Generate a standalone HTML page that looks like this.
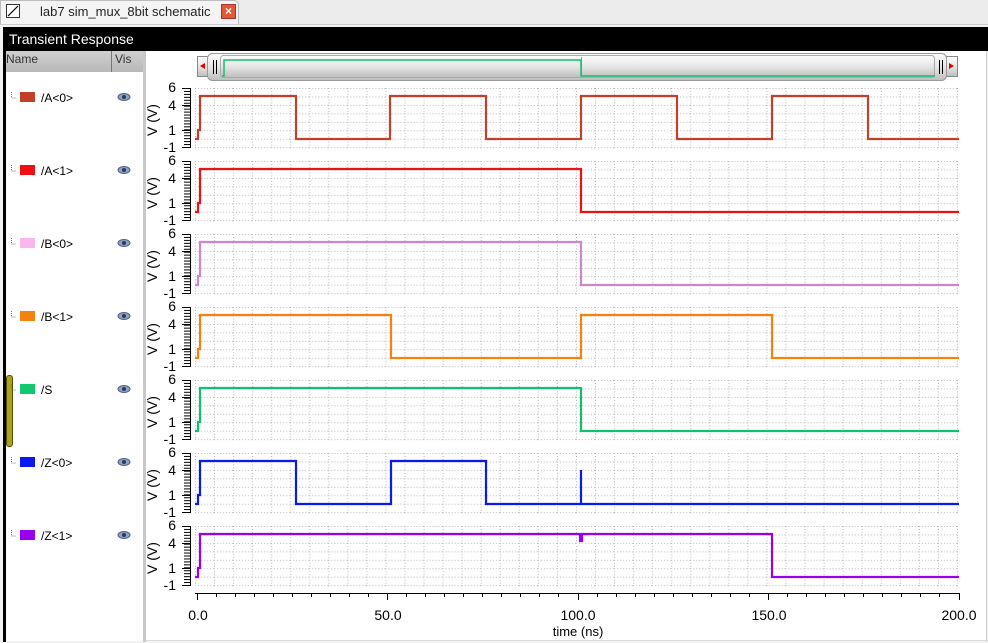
<!DOCTYPE html>
<html><head><meta charset="utf-8"><style>
body{margin:0;width:988px;height:642px;overflow:hidden;background:#ececec;font-family:"Liberation Sans",sans-serif;position:relative}
.a{position:absolute}
</style></head><body>
<div class="a" style="left:0;top:0;width:237px;height:24px;background:#f4f4f4;border:1px solid #bbb;border-bottom:none;border-radius:0 5px 0 0"></div>
<div class="a" style="left:6px;top:4px;width:12px;height:12px;border:1px solid #333;background:#fff"><svg width="12" height="12" style="position:absolute;left:0;top:0"><line x1="1" y1="11" x2="11" y2="1" stroke="#000" stroke-width="1.2"/></svg></div>
<div class="a" style="left:40px;top:4px;font-size:13px;color:#222">lab7 sim_mux_8bit schematic</div>
<div class="a" style="left:221px;top:4px;width:13px;height:13px;background:#e05a3a;border:1px solid #a33;color:#fff;font-size:12px;line-height:13px;text-align:center;font-weight:bold">×</div>
<div class="a" style="left:0;top:24px;width:988px;height:618px;background:#f2f2f2;border-top:1px solid #ccc"></div>
<div class="a" style="left:3px;top:27px;width:985px;height:24px;background:#000"></div>
<div class="a" style="left:9px;top:31px;font-size:14px;color:#fff">Transient Response</div>
<div class="a" style="left:3px;top:51px;width:3px;height:591px;background:#000"></div>
<div class="a" style="left:6px;top:51px;width:137px;height:590px;background:#fff"></div>
<div class="a" style="left:6px;top:51px;width:137px;height:21px;background:linear-gradient(#d0d0d0,#b8b8b8)"></div>
<div class="a" style="left:111px;top:51px;width:1px;height:21px;background:#777"></div>
<div class="a" style="left:6px;top:52px;font-size:12px;color:#333">Name</div>
<div class="a" style="left:115px;top:52px;font-size:12px;color:#333">Vis</div>
<div class="a" style="left:143px;top:51px;width:3px;height:591px;background:#c8c8c8"></div>
<div class="a" style="left:146px;top:51px;width:840px;height:589px;background:#fff"></div>
<div class="a" style="left:6px;top:375px;width:5px;height:70px;background:#a9a21c;border:1px solid #554f00;border-radius:3px"></div>

<svg class="a" style="left:0;top:0" width="988" height="642">
<defs>
<pattern id="g" x="195" y="88" width="19.05" height="8.45" patternUnits="userSpaceOnUse">
<line x1="0.5" y1="0" x2="0.5" y2="8.45" stroke="#b8b8b8" stroke-dasharray="1 2"/>
<line x1="0" y1="0.5" x2="19.05" y2="0.5" stroke="#b8b8b8" stroke-dasharray="1 2"/>
</pattern>
<pattern id="r" x="0" y="88" width="10" height="2.95" patternUnits="userSpaceOnUse">
<line x1="0" y1="0.5" x2="10" y2="0.5" stroke="#000"/>
</pattern>
<g id="eye"><ellipse cx="0" cy="0" rx="6" ry="3.5" fill="#8fa0c0" stroke="#506080"/><circle cx="0" cy="0" r="2" fill="#2a3a60"/></g>
<g id="strip">
<rect x="195" y="88" width="765" height="61" fill="url(#g)"/>
<rect x="184" y="88" width="6" height="60" fill="url(#r)"/>
<line x1="190.5" y1="88" x2="190.5" y2="148" stroke="#000"/>
<line x1="182" y1="88.5" x2="190" y2="88.5" stroke="#000"/><line x1="182" y1="105.5" x2="190" y2="105.5" stroke="#000"/><line x1="182" y1="130.5" x2="190" y2="130.5" stroke="#000"/><line x1="182" y1="147.5" x2="190" y2="147.5" stroke="#000"/>
<text x="176" y="92" font-size="14" text-anchor="end" font-family="Liberation Sans">6</text>
<text x="176" y="110" font-size="14" text-anchor="end" font-family="Liberation Sans">4</text>
<text x="176" y="135" font-size="14" text-anchor="end" font-family="Liberation Sans">1</text>
<text x="176" y="152" font-size="14" text-anchor="end" font-family="Liberation Sans">-1</text>
<text transform="translate(157,136) rotate(-90)" font-size="14" font-family="Liberation Sans">V (V)</text>
<use href="#eye" x="124" y="97"/>
<path d="M11.5,92 V98 H16" stroke="#777" stroke-dasharray="1 1" fill="none"/>
</g>
</defs>
<use href="#strip" y="0"/><use href="#strip" y="73"/><use href="#strip" y="146"/><use href="#strip" y="219"/><use href="#strip" y="292"/><use href="#strip" y="365"/><use href="#strip" y="438"/>
<g fill="none" stroke-width="2.2">
<path stroke="#c2402a" d="M195,139 H198 V130 H200 V96 H296 V139 H390 V96 H486 V139 H581 V96 H677 V139 H772 V96 H868 V139 H959"/>
<path transform="translate(0,73)" stroke="#ee1111" d="M195,139 H198 V130 H200 V96 H581 V139 H959"/>
<path transform="translate(0,146)" stroke="#cc88cc" d="M195,139 H198 V130 H200 V96 H581 V139 H959"/>
<path transform="translate(0,219)" stroke="#f5820f" d="M195,139 H198 V130 H200 V96 H391 V139 H581 V96 H772 V139 H959"/>
<path transform="translate(0,292)" stroke="#10c070" d="M195,139 H198 V130 H200 V96 H581 V139 H959"/>
<path transform="translate(0,365)" stroke="#0a1aee" d="M195,139 H198 V130 H200 V96 H296 V139 H391 V96 H486 V139 H581 V105 V139 H959"/>
<path transform="translate(0,438)" stroke="#9900ee" d="M195,139 H198 V130 H200 V96 H580 V103 H582 V96 H772 V139 H959"/>
</g>
<g font-size="12" font-family="Liberation Sans" fill="#000">
<rect x="20" y="92" width="15" height="10" fill="#c2402a"/><text x="41" y="102">/A&lt;0&gt;</text>
<rect x="20" y="165" width="15" height="10" fill="#ee1111"/><text x="41" y="175">/A&lt;1&gt;</text>
<rect x="20" y="238" width="15" height="10" fill="#f8b8ee"/><text x="41" y="248">/B&lt;0&gt;</text>
<rect x="20" y="311" width="15" height="10" fill="#f5820f"/><text x="41" y="321">/B&lt;1&gt;</text>
<rect x="20" y="384" width="15" height="10" fill="#10c870"/><text x="41" y="394">/S</text>
<rect x="20" y="457" width="15" height="10" fill="#0a1aee"/><text x="41" y="467">/Z&lt;0&gt;</text>
<rect x="20" y="530" width="15" height="10" fill="#9900ee"/><text x="41" y="540">/Z&lt;1&gt;</text>
</g>
<line x1="195" y1="593.5" x2="960" y2="593.5" stroke="#000"/>
<g stroke="#000">
<path d="M197.5,593V600 M216.5,593V597 M235.5,593V597 M254.5,593V597 M273.5,593V597 M292.5,593V597 M311.5,593V597 M330.5,593V597 M349.5,593V597 M368.5,593V597 M387.5,593V600 M406.5,593V597 M425.5,593V597 M444.5,593V597 M463.5,593V597 M482.5,593V597 M501.5,593V597 M520.5,593V597 M539.5,593V597 M558.5,593V597 M578.5,593V600 M597.5,593V597 M616.5,593V597 M635.5,593V597 M654.5,593V597 M673.5,593V597 M692.5,593V597 M711.5,593V597 M730.5,593V597 M749.5,593V597 M768.5,593V600 M787.5,593V597 M806.5,593V597 M825.5,593V597 M844.5,593V597 M863.5,593V597 M882.5,593V597 M901.5,593V597 M920.5,593V597 M939.5,593V597 M959.5,593V600"/>
</g>
<g font-size="14" font-family="Liberation Sans" text-anchor="middle">
<text x="198" y="620">0.0</text><text x="388" y="620">50.0</text><text x="578" y="620">100.0</text><text x="769" y="620">150.0</text><text x="959" y="620">200.0</text>
<text x="578" y="636" font-size="13">time (ns)</text>
</g>
<defs><linearGradient id="sb" x1="0" y1="0" x2="0" y2="1"><stop offset="0" stop-color="#fdfdfd"/><stop offset=".5" stop-color="#e6e6e6"/><stop offset="1" stop-color="#bdbdbd"/></linearGradient></defs>
<rect x="197.5" y="56.5" width="11" height="20" fill="url(#sb)" stroke="#888"/>
<path d="M200,66 L205,63 V69 Z" fill="#d00"/>
<rect x="946.5" y="56.5" width="11" height="20" fill="url(#sb)" stroke="#888"/>
<path d="M954,66 L949,63 V69 Z" fill="#d00"/>
<rect x="207.5" y="53.5" width="739" height="27" rx="5" fill="url(#sb)" stroke="#999"/>
<rect x="220.5" y="55.5" width="714" height="22" rx="3" fill="url(#sb)" stroke="#aaa"/>
<path d="M213.5,60V74 M216.5,60V74 M939.5,60V74 M942.5,60V74" stroke="#000"/>
<line x1="581.5" y1="57" x2="581.5" y2="76" stroke="#999"/>
<path d="M222,76 H224 V60 H581 V76 H935" stroke="#10c070" fill="none" stroke-width="1.5"/>
<line x1="986.5" y1="51" x2="986.5" y2="642" stroke="#ccc"/>
<line x1="146" y1="640.5" x2="988" y2="640.5" stroke="#ddd"/>
</svg>
</body></html>
